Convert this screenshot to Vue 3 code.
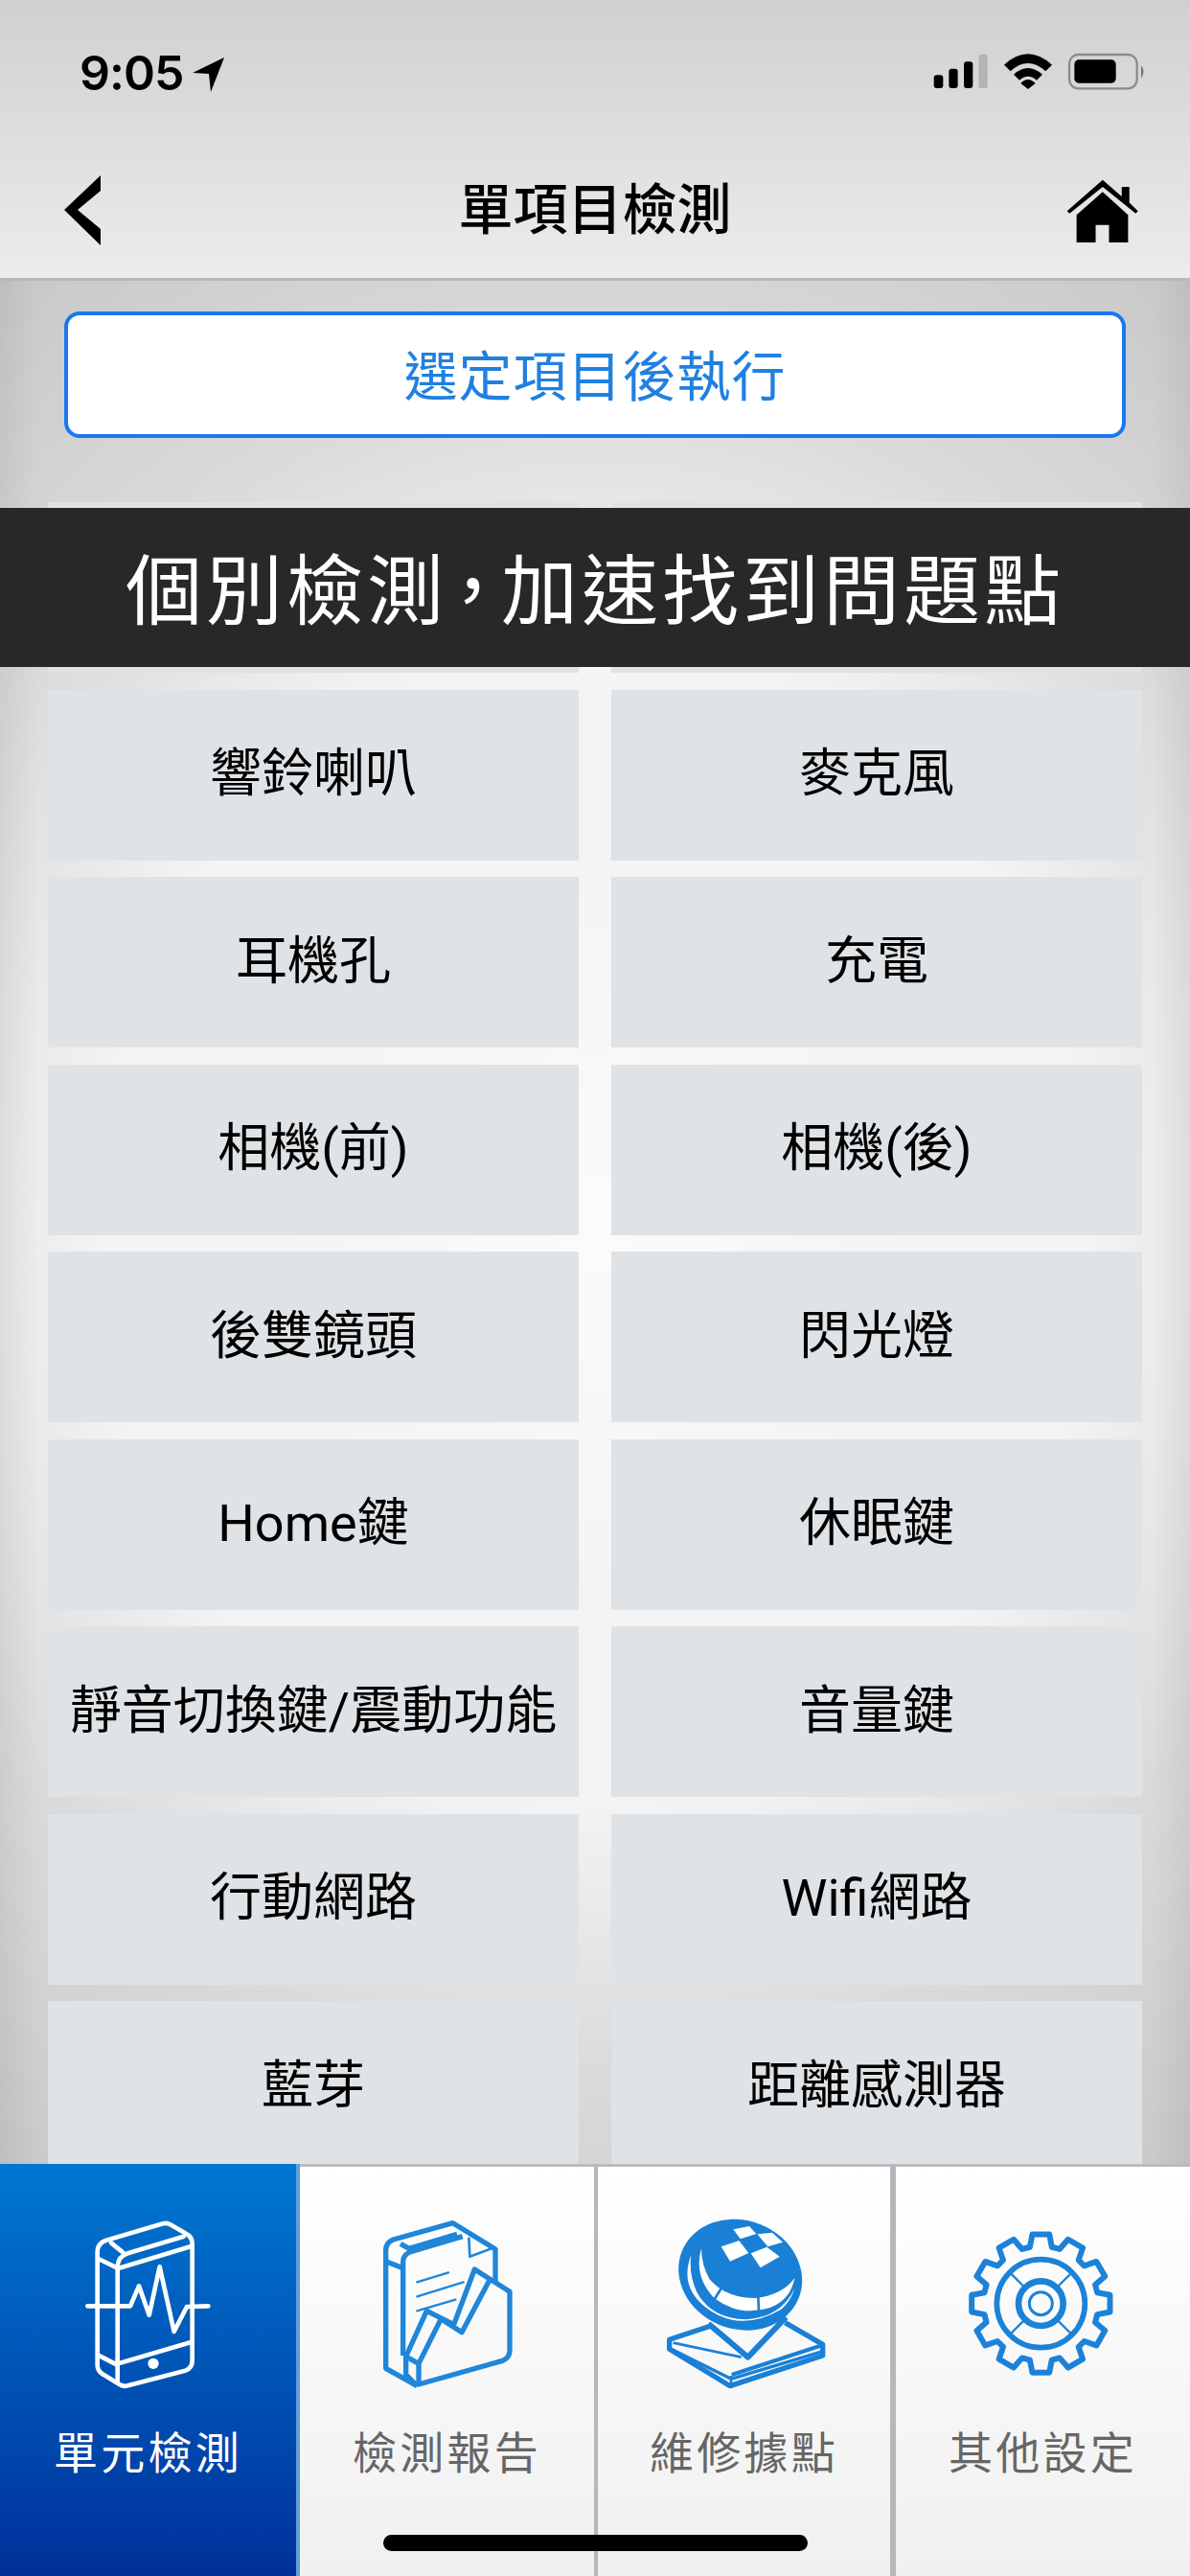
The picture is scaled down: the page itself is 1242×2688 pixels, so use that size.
<script setup>
const rows = [
  ["", ""],
  ["響鈴喇叭", "麥克風"],
  ["耳機孔", "充電"],
  ["相機(前)", "相機(後)"],
  ["後雙鏡頭", "閃光燈"],
  ["Home鍵", "休眠鍵"],
  ["靜音切換鍵/震動功能", "音量鍵"],
  ["行動網路", "Wifi網路"],
  ["藍芽", "距離感測器"],
]
const items = rows.flat()

// gear outline, 12 teeth around the centre of the icon
function gearPath() {
  const cx = 262
  const cy = 272
  const pt = (deg, r) => {
    const a = (deg * Math.PI) / 180
    return (cx + r * Math.cos(a)).toFixed(1) + " " + (cy + r * Math.sin(a)).toFixed(1)
  }
  let d = ""
  for (let i = 0; i < 12; i++) {
    const a = i * 30 - 90
    d += (i === 0 ? "M" : "L") + pt(a - 11, 180)
    d += "L" + pt(a - 7, 218) + "L" + pt(a + 7, 218) + "L" + pt(a + 11, 180)
  }
  return d + "Z"
}
const gear_d = gearPath()
const spokes = [45, 135, 225, 315]
function spokeEnd(deg, r) {
  const a = (deg * Math.PI) / 180
  return { x: 262 + r * Math.cos(a), y: 272 + r * Math.sin(a) }
}
</script>

<template>
  <div class="page">
    <header class="top">
      <div class="status">
        <div class="time-box">
          <span class="time">9:05</span>
          <svg class="loc" viewBox="0 0 36 38" width="36" height="38">
            <path d="M34 1 L1 17 L18 18 L20 37 Z" fill="#000" />
          </svg>
        </div>
        <svg class="status-icons" viewBox="60 50 675 120" width="225" height="40">
          <rect x="68" y="120" width="29" height="41" rx="10" fill="#000" />
          <rect x="115" y="100" width="28" height="61" rx="9" fill="#000" />
          <rect x="162" y="78" width="28" height="83" rx="9" fill="#000" />
          <rect x="208" y="55" width="28" height="106" rx="8" fill="#b4b4b4" />
          <path d="M288 88 Q362 20 438 88 L418 108 Q362 58 308 108 Z" fill="#000" />
          <path d="M318 118 Q362 78 408 118 L390 136 Q362 112 336 136 Z" fill="#000" />
          <path d="M340 146 Q362 122 386 146 L363 164 Z" fill="#000" />
          <rect x="492" y="56" width="212" height="106" rx="28" fill="none" stroke="#8c8c8c" stroke-width="7" />
          <rect x="508" y="72" width="130" height="73" rx="14" fill="#000" />
          <path d="M717 90 Q732 110 717 130 Z" fill="#777" />
        </svg>
      </div>
      <div class="nav">
        <svg class="back" viewBox="0 0 40 74" width="40" height="74">
          <path d="M39 0 L1 36 L39 73 L39 56 L15 36 L39 16 Z" fill="#000" />
        </svg>
        <h1 class="title">單項目檢測</h1>
        <svg class="home" viewBox="490 435 226 200" width="75" height="67">
          <path d="M492 534 L604 436 L664 488 L664 458 L688 458 L688 508 L715 534 L708 542 L604 458 L500 542 Z" fill="#000" />
          <path d="M522 546 L604 474 L684 546 L684 633 L624 633 L624 578 L582 578 L582 633 L522 633 Z" fill="#000" />
        </svg>
      </div>
    </header>

    <main class="content">
      <button class="run-btn">選定項目後執行</button>
      <div class="grid">
        <div v-for="(item, index) in items" :key="index" class="cell">{{ item }}</div>
      </div>
    </main>

    <nav class="tabs">
      <div class="tab active">
        <svg class="tab-icon" viewBox="0 0 567 630" width="189" height="210" fill="none" stroke="#fff" stroke-width="14" stroke-linecap="round" stroke-linejoin="round">
          <path d="M125 140 Q125 115 150 105 L330 52 Q340 48 352 54 L400 82 Q422 92 422 115 L422 480 Q422 505 400 512 L215 560 Q205 562 195 556 L140 522 Q125 512 125 495 Z" />
          <path d="M188 480 L188 185 Q190 155 220 145 L395 92" />
          <path d="M188 480 L188 548" />
          <path d="M168 112 L205 142" />
          <path d="M128 162 L186 190" />
          <path d="M198 190 L416 124" />
          <path d="M196 488 L416 424" />
          <path d="M128 464 L186 494" />
          <path d="M94 310 L228 310 L255 247 L287 338 L320 187 L365 390 L405 312 L472 310" />
          <circle cx="300" cy="490" r="17" fill="#fff" stroke="none" />
        </svg>
        <span class="tab-label">單元檢測</span>
      </div>
      <div class="tab">
        <svg class="tab-icon" viewBox="0 0 510 630" width="170" height="210" fill="none" stroke="#1f86d9" stroke-width="16" stroke-linejoin="round">
          <path d="M160 560 L62 505 L62 135 Q62 112 85 102 L272 50 L405 132 L405 235" />
          <path d="M108 115 L135 130 L285 85" />
          <path d="M116 465 L116 172 Q116 148 140 140 L302 92" />
          <path d="M62 170 L112 190" />
          <path d="M322 95 L325 155 L392 130" stroke-width="8" />
          <path d="M160 235 L258 205 M160 280 L305 235 M160 325 L280 290" stroke-width="7" stroke-linecap="round" />
          <path d="M125 468 L190 325 L275 368 L340 195 L450 265 L450 450 Q450 472 425 482 L165 555 L165 490 L125 468 L125 525 L160 560" />
          <path d="M165 490 L235 350 L300 392 L385 232" />
        </svg>
        <span class="tab-label">檢測報告</span>
      </div>
      <div class="tab">
        <svg class="tab-icon" viewBox="0 0 570 630" width="190" height="210" fill="none" stroke="#1a80d6" stroke-width="14" stroke-linejoin="round">
          <path d="M180 372 L50 415 L50 445 L240 560 L530 465 L530 430 L412 362" stroke-width="16" />
          <path d="M62 425 L275 470" stroke-width="8" />
          <path d="M50 442 L243 538 L530 452" stroke-width="10" />
          <path d="M245 525 L530 432" stroke-width="12" />
          <path d="M243 528 L243 558" stroke-width="8" />
          <path d="M172 365 L296 470 L415 345" stroke-width="18" />
          <ellipse cx="272" cy="212" rx="197" ry="170" transform="rotate(22 272 212)" fill="#1a80d6" stroke="none" />
          <path d="M118 150 Q80 250 165 315 Q270 395 400 320 Q430 295 442 255 Q400 345 290 352 Q180 350 135 265 Q110 210 118 150 Z" fill="#fff" stroke="none" />
          <path d="M150 130 Q125 215 190 285 Q270 345 365 315 Q430 290 442 222 Q405 275 320 285 Q225 285 175 225 Q150 180 150 130 Z" fill="#fff" stroke="none" />
          <path d="M212 255 L190 290 M328 280 L330 330" stroke-width="8" />
          <path d="M250 70 L300 60 L322 84 L272 100 Z M325 85 L372 80 L405 110 L358 124 Z M212 124 L268 105 L298 144 L240 170 Z M305 145 L355 125 L395 155 L335 190 Z" fill="#fff" stroke="none" />
        </svg>
        <span class="tab-label">維修據點</span>
      </div>
      <div class="tab">
        <svg class="tab-icon" viewBox="0 -30 540 630" width="180" height="210" fill="none" stroke="#1c82d8" stroke-linejoin="round">
          <path :d="gear_d" stroke-width="18" />
          <circle cx="262" cy="272" r="138" stroke-width="17" />
          <circle cx="262" cy="272" r="70" stroke-width="20" />
          <circle cx="262" cy="272" r="36" stroke-width="9" />
          <line
            v-for="deg in spokes"
            :key="deg"
            :x1="spokeEnd(deg, 76).x"
            :y1="spokeEnd(deg, 76).y"
            :x2="spokeEnd(deg, 134).x"
            :y2="spokeEnd(deg, 134).y"
            stroke-width="7"
          />
        </svg>
        <span class="tab-label">其他設定</span>
      </div>
    </nav>

    <div class="banner"><span>個別檢測<span class="comma">&#xFF0C;</span>加速找到問題點</span></div>
    <div class="home-bar"></div>
  </div>
</template>

<style scoped>
.page {
  position: relative;
  width: 1242px;
  height: 2688px;
  overflow: hidden;
  display: flex;
  flex-direction: column;
  font-family: Roboto, "Noto Sans CJK TC", sans-serif;
  color: #000;
}
.top {
  height: 293px;
  box-sizing: border-box;
  flex-shrink: 0;
  background: linear-gradient(#d0d0d0, #ececec);
  border-bottom: 3px solid #b8b8b8;
}
.status {
  height: 150px;
  box-sizing: border-box;
  padding: 54px 45px 0 83px;
  display: flex;
  justify-content: space-between;
  align-items: flex-start;
}
.time-box {
  display: flex;
  align-items: center;
  gap: 9px;
}
.time {
  font-family: Inter, sans-serif;
  font-size: 50px;
  font-weight: 600;
  line-height: 44px;
  letter-spacing: -1px;
}
.loc {
  display: block;
  margin-top: 3px;
}
.status-icons {
  display: block;
  margin-top: 1px;
}
.nav {
  height: 140px;
  padding: 0 54px;
  display: grid;
  grid-template-columns: 1fr auto 1fr;
  align-items: center;
}
.title {
  margin: 0;
  font-size: 57px;
  font-weight: 500;
  line-height: 70px;
}
.back,
.home {
  display: block;
}
.back {
  margin-left: 12px;
}
.home {
  justify-self: end;
}
.content {
  flex: 1;
  min-height: 0;
  overflow: hidden;
  background:
    linear-gradient(90deg, rgba(0, 0, 0, 0.05), transparent 40px, transparent 1202px, rgba(0, 0, 0, 0.05)),
    radial-gradient(ellipse 1044px 1218px at 621px 985px, #fbfbfb 0%, #f4f4f4 31%, #f4f4f4 49%, #e6e6e6 62%, #dadada 73%, #d4d4d4 83%, #c8c8c8 100%);
}
.run-btn {
  display: block;
  width: 1108px;
  height: 132px;
  margin: 32px 67px 0;
  padding: 0 0 5px;
  box-sizing: border-box;
  border: 4px solid #1a78f0;
  border-radius: 16px;
  background: #fff;
  color: #2080e0;
  font-family: inherit;
  font-size: 56px;
  letter-spacing: 1px;
}
.grid {
  margin: 67px 50px 0;
  display: grid;
  grid-template-columns: 554px 554px;
  grid-auto-rows: 178px;
  column-gap: 34px;
  row-gap: 17.5px;
}
.cell {
  display: flex;
  align-items: center;
  justify-content: center;
  background: #dfe3e6;
  font-size: 54px;
  line-height: 1.2;
  white-space: nowrap;
}
.tabs {
  height: 430px;
  flex-shrink: 0;
  display: flex;
}
.tab {
  box-sizing: border-box;
  width: 309px;
  padding-top: 42px;
  display: flex;
  flex-direction: column;
  align-items: center;
  background: linear-gradient(#fff, #f0f0f0);
  border-top: 3px solid #b9bcbf;
  border-left: 4px solid #b5b8bb;
  color: #666;
}
.tab:nth-child(2) {
  width: 307px;
  border-left: 0;
}
.tab:last-child {
  width: 313px;
  border-left-width: 6px;
}
.tab.active {
  width: 313px;
  border-top: 0;
  border-left: 0;
  border-right: 4px solid #5f9fd8;
  padding-top: 45px;
  background: linear-gradient(#0078d2, #00309a);
  color: #fff;
}
.tab-icon {
  display: block;
  flex-shrink: 0;
}
.tab-label {
  margin-top: 14px;
  font-size: 46px;
  line-height: 66px;
  letter-spacing: 3.3px;
}
.banner {
  position: absolute;
  left: 0;
  top: 530px;
  width: 100%;
  height: 166px;
  box-sizing: border-box;
  padding-bottom: 6px;
  display: flex;
  align-items: center;
  justify-content: center;
  background: #282828;
  color: #fff;
  font-family: "Noto Sans CJK TC", sans-serif;
  font-size: 80px;
  letter-spacing: 4px;
  white-space: nowrap;
}
.comma {
  margin: 0 -14px;
}
.home-bar {
  position: absolute;
  left: 400px;
  top: 2645px;
  width: 443px;
  height: 17px;
  border-radius: 9px;
  background: #000;
}
</style>
